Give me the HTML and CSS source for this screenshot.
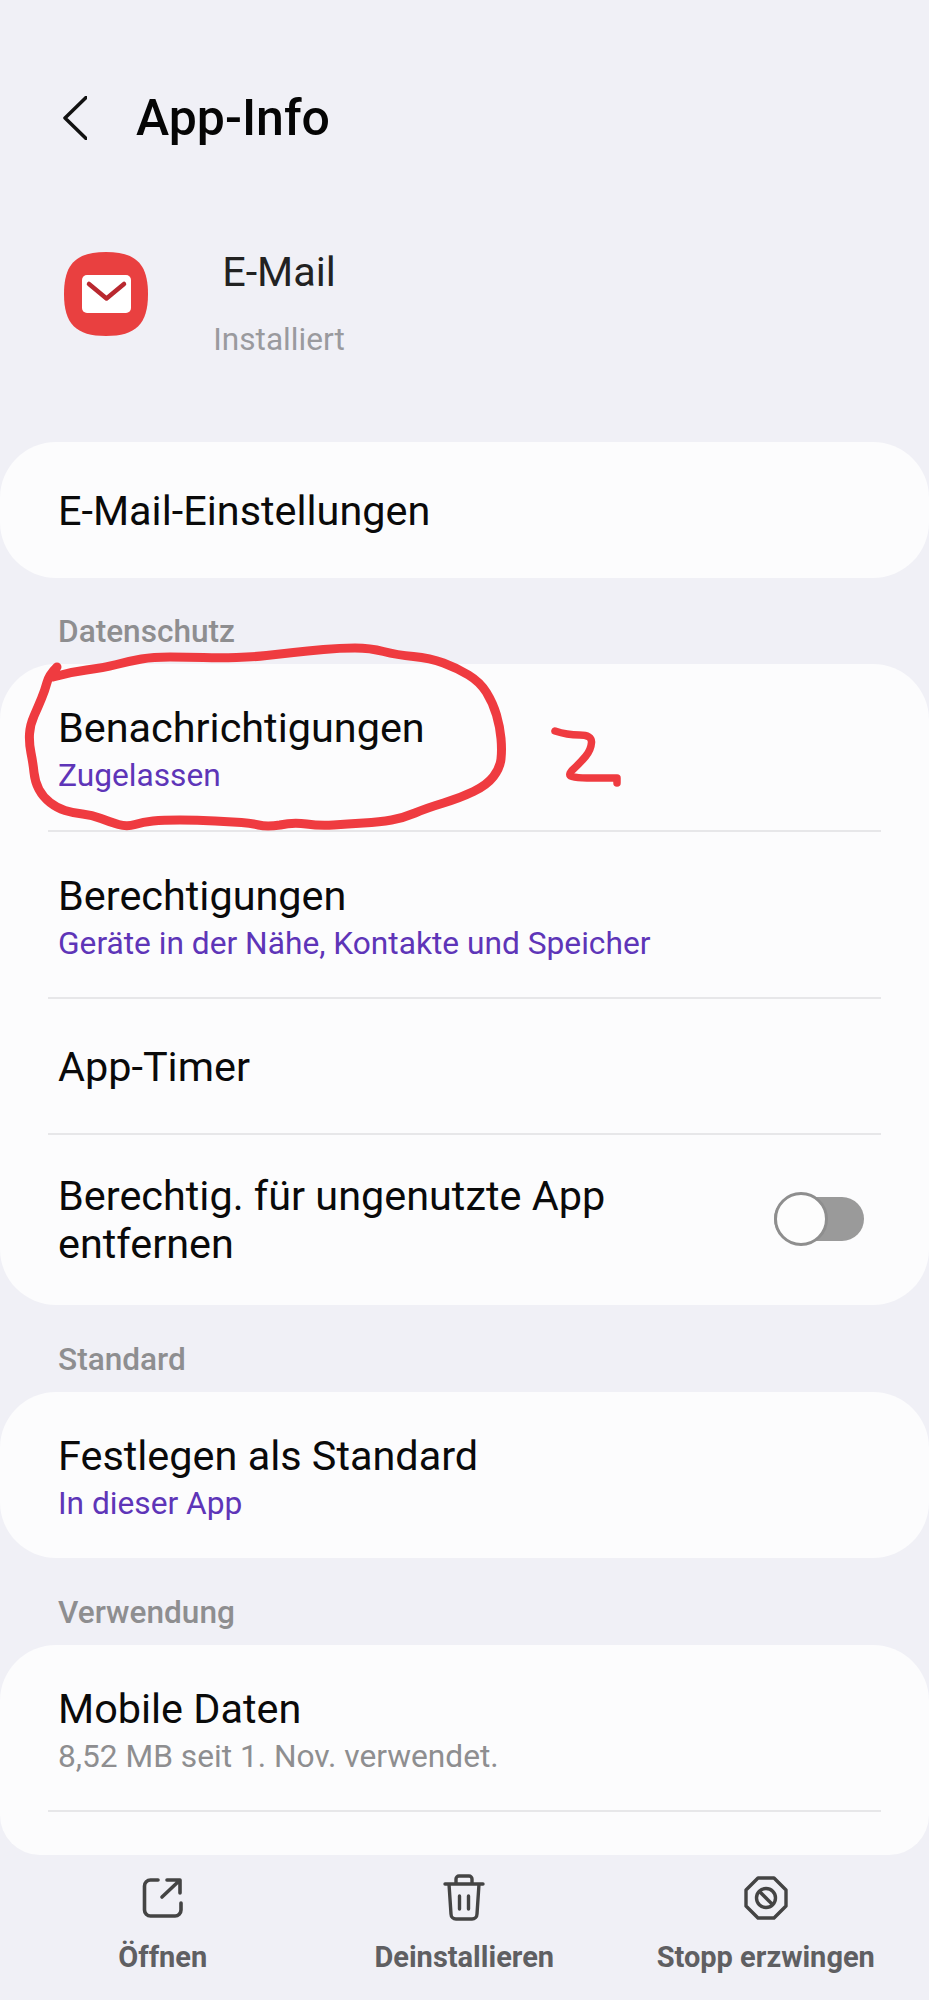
FILE: index.html
```html
<!doctype html>
<html>
<head>
<meta charset="utf-8">
<title>App-Info</title>
<link rel="stylesheet" href="styles.css">
</head>

<body>
<div class="page">
	<div class="head">
		<svg class="back" width="24" height="44" viewBox="0 0 24 44"><path d="M23 1.500 2 22l21 20.500" fill="none" stroke="#111" stroke-width="3.500" stroke-linecap="round" stroke-linejoin="round"/></svg>
		<h1>App-Info</h1>
	</div>

	<div class="app">
		<svg class="appicon" width="84" height="84" viewBox="0 0 84 84">
			<path d="M42 0C72 0 84 12 84 42C84 72 72 84 42 84C12 84 0 72 0 42C0 12 12 0 42 0Z" fill="#e94040"/>
			<rect x="18" y="23" width="49" height="38" rx="5" fill="#fff"/>
			<path d="M25 32l17.500 14.500L60 32" fill="none" stroke="#b9282f" stroke-width="4.500" stroke-linecap="round" stroke-linejoin="round"/>
		</svg>
		<div class="appname">
			<div class="name">E-Mail</div>
			<div class="state">Installiert</div>
		</div>
	</div>

	<div class="card">
		<div class="row single tall"><div class="title">E-Mail-Einstellungen</div></div>
	</div>

	<div class="label first">Datenschutz</div>
	<div class="card">
		<div class="row">
			<div class="title">Benachrichtigungen</div>
			<div class="sub">Zugelassen</div>
		</div>
		<div class="divider"></div>
		<div class="row">
			<div class="title">Berechtigungen</div>
			<div class="sub">Geräte in der Nähe, Kontakte und Speicher</div>
		</div>
		<div class="divider"></div>
		<div class="row single"><div class="title">App-Timer</div></div>
		<div class="divider"></div>
		<div class="row toggle-row">
			<div class="title">Berechtig. für ungenutzte App<br>entfernen</div>
			<div class="toggle"><span></span></div>
		</div>
	</div>

	<div class="label">Standard</div>
	<div class="card">
		<div class="row">
			<div class="title">Festlegen als Standard</div>
			<div class="sub">In dieser App</div>
		</div>
	</div>

	<div class="label">Verwendung</div>
	<div class="card last">
		<div class="row">
			<div class="title">Mobile Daten</div>
			<div class="sub grey">8,52 MB seit 1. Nov. verwendet.</div>
		</div>
		<div class="divider"></div>
	</div>

	<div class="bar">
		<div class="action">
			<div class="ico"><svg width="42" height="42" viewBox="0 0 42 42"><path d="M16 3H8.500a6 6 0 0 0-6 6v24a6 6 0 0 0 6 6H33a6 6 0 0 0 6-6v-7M25 3h13v13M37 4 20 20" fill="none" stroke="#444" stroke-width="3.600" stroke-linecap="round" stroke-linejoin="round"/></svg></div>
			<span>Öffnen</span>
		</div>
		<div class="action">
			<div class="ico"><svg width="44" height="48" viewBox="0 0 44 48"><path d="M3 10h38M14 10V5a3 3 0 0 1 3-3h10a3 3 0 0 1 3 3v5M7 10l2 30a5 5 0 0 0 5 5h16a5 5 0 0 0 5-5l2-30M17.500 22v13M26.500 22v13" fill="none" stroke="#444" stroke-width="3.400" stroke-linecap="round" stroke-linejoin="round"/></svg></div>
			<span>Deinstallieren</span>
		</div>
		<div class="action">
			<div class="ico"><svg width="44" height="44" viewBox="0 0 44 44"><path d="M14 2h16l12 12v16L30 42H14L2 30V14z" fill="none" stroke="#444" stroke-width="3.400" stroke-linejoin="round"/><circle cx="22" cy="22" r="9.500" fill="none" stroke="#444" stroke-width="3.400"/><path d="M15.500 15.500l13 13" stroke="#444" stroke-width="3.400"/></svg></div>
			<span>Stopp erzwingen</span>
		</div>
	</div>

	<!-- rote Markierung -->
	<svg class="marker" width="929" height="2000" viewBox="0 0 929 2000">
		<path d="M57 667Q49 675 47 682.500Q45 690 41.500 698.500Q38 707 34 716Q30 725 29.500 734Q29 743 31 753Q33 763 34 772.500Q35 782 39 789.500Q43 797 50 802.500Q57 808 65 810.500Q73 813 82.500 814Q92 815 101 818.500Q110 822 118.500 824.500Q127 827 135 824.500Q143 822 153 821Q163 820 180 820Q197 820 215 821Q233 822 241.500 822.500Q250 823 258.500 825Q267 827 280 825Q293 822 306.500 824Q320 826 333.500 825Q347 824 363.500 823Q380 822 391.500 820Q403 818 415 813Q427 808 443.500 803Q460 798 473.500 791.500Q487 785 493.500 776.500Q500 768 501 759Q502 750 501 738.500Q500 727 496.500 715Q493 703 486.500 692.500Q480 682 468.500 675Q457 668 443.500 663Q430 658 413.500 656.500Q397 655 383.500 651.500Q370 648 355 648Q340 648 323.500 649.500Q307 651 293.500 652.500Q280 654 266.500 655.500Q253 657 236.500 657.500Q220 658 203.500 657.500Q187 657 170 657Q153 657 141.500 659Q130 661 116.500 664.500Q103 668 86.500 670Q70 672 53 677"/>
		<path class="thin" d="M555 731Q567 735 579.500 735Q592 735 591.500 742.500Q591 750 585.500 756.500Q580 763 573.500 769Q567 775 572 776.500Q577 778 587 778Q597 778 607 778L617 778L617 783"/>
	</svg>
</div>
</body>
</html>
```

FILE: styles.css
```css
* {margin:0; padding:0; box-sizing:border-box;}

body {background:#f0f0f6; font-family:Roboto, "Liberation Sans", sans-serif; color:#111;}

.page {width:929px; height:2000px; position:relative; overflow:hidden; background:#f0f0f6;}

.head {display:flex; align-items:center; height:120px; margin-top:58px; padding-left:63px;}
.head h1 {font-size:50px; font-weight:500; margin-left:49px; color:#050505;}

.app {display:flex; align-items:flex-start; height:264px; padding:74px 0 0 64px;}
.appname {width:140px; margin-left:61px; text-align:center; margin-top:-5px;}
.name {font-size:41.400px; line-height:50px; color:#222;}
.state {font-size:31.600px; line-height:40px; margin-top:23px; color:#9a9a9e;}

.card {background:#fcfcfd; border-radius:56px;}
.last {border-radius:56px 56px 40px 40px; height:210px;}

.label {height:87px; padding:35px 0 0 58px; font-size:31.600px; line-height:40px; font-weight:500; color:#8e8e90;}
.first {height:86px; padding-top:34px;}

.row {padding:40px 58px 0; height:165.500px;}
.single {height:134px; display:flex; align-items:center; padding-top:2px;}
.tall {height:136px;}
.title {font-size:41.400px; line-height:48px; color:#0a0a0a;}
.sub {font-size:31.700px; line-height:48px; color:#5e35b8;}
.grey {color:#8e8e90;}
.divider {height:2px; margin:0 48px; background:#e7e7e9;}

.toggle-row {height:170px; display:flex; align-items:center; justify-content:space-between; padding:0 65px 0 58px;}
.toggle {width:90px; height:44px; margin-bottom:3px; border-radius:22px; background:#9a9a9a; position:relative;}
.toggle span {position:absolute; left:0; top:-5px; width:54px; height:54px; border-radius:50%; background:#fdfdfd; border:3px solid #8e8e8e;}

.bar {position:absolute; left:12px; top:1874px; display:grid; grid-template-columns:repeat(3, 301.500px);}
.action {display:flex; flex-direction:column; align-items:center; font-size:29px; line-height:40px; font-weight:700; color:#5f5f62;}
.ico {height:48px; display:flex; align-items:center; margin-bottom:15px;}

.marker {position:absolute; left:0; top:0; pointer-events:none;}
.marker path {fill:none; stroke:#ef3b40; stroke-width:9; stroke-linecap:round; stroke-linejoin:round;}
.marker .thin {stroke-width:7.500;}
```
